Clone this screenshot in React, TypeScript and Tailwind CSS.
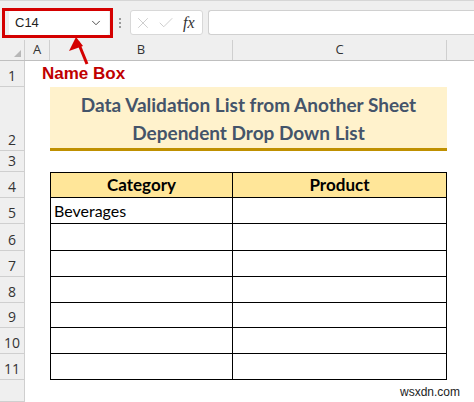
import { ChevronDown, X, Check } from "lucide-react";

const rowHeights = [26, 64, 21, 26, 26, 27, 26, 26, 25, 26, 26, 22];

function RowHead({ n, h }: { n: number | null; h: number }) {
  return (
    <div
      className="w-[25px] shrink-0 bg-[#efefef] border-r border-b border-[#cfcfcf] flex items-end justify-center pb-0 text-[14px] text-[#333]"
      style={{ height: h }}
    >
      {n}
    </div>
  );
}

export default function App() {
  return (
    <div className="relative w-[474px] h-[402px] overflow-hidden bg-white font-['Open_Sans',sans-serif]">
      {/* formula bar */}
      <div className="h-[40px] bg-[#efefef] border-t border-[#d6d6d6] flex items-start pt-[9px]">
        <div className="ml-[9px] w-[100px] h-[25px] bg-white rounded-[3px] flex items-center justify-between px-[6px] text-[13px] text-[#222]">
          <span className="font-['Liberation_Sans',sans-serif]">C14</span>
          <ChevronDown size={14} strokeWidth={1.6} className="text-[#444]" />
        </div>
        <div className="w-[21px] h-[25px] flex flex-col items-center justify-center gap-[2px]">
          <div className="w-[2px] h-[2px] bg-[#999]" />
          <div className="w-[2px] h-[2px] bg-[#999]" />
          <div className="w-[2px] h-[2px] bg-[#999]" />
        </div>
        <div className="w-[73px] h-[25px] bg-white border border-[#d8d8d8] rounded-[3px] flex items-center gap-[5px] px-[3px]">
          <X size={18} strokeWidth={1} className="text-[#bdbdbd]" />
          <Check size={18} strokeWidth={1} className="text-[#bdbdbd]" />
          <span className="font-['Liberation_Serif',serif] italic text-[16px] text-[#333] ml-[3px]">fx</span>
        </div>
        <div className="ml-[5px] flex-1 h-[25px] bg-white border border-[#d0d0d0] border-r-0 rounded-l-[3px]" />
      </div>

      {/* column headers */}
      <div className="flex h-[21px] bg-[#efefef] border-b border-[#bfbfbf] text-[13px] text-[#333]">
        <div className="w-[25px] shrink-0 border-r border-[#cfcfcf] flex items-end justify-end pr-[3px] pb-[3px]">
          <svg width="7" height="7" viewBox="0 0 7 7">
            <polygon points="7,0 7,7 0,7" fill="#b7b7b7" />
          </svg>
        </div>
        <div className="w-[25px] shrink-0 border-r border-[#cfcfcf] flex items-center justify-center">A</div>
        <div className="w-[183px] shrink-0 border-r border-[#cfcfcf] flex items-center justify-center">B</div>
        <div className="w-[214px] shrink-0 border-r border-[#cfcfcf] flex items-center justify-center">C</div>
        <div className="flex-1" />
      </div>

      {/* sheet body */}
      <div className="flex">
        <div className="flex flex-col">
          {rowHeights.map((h, i) => (
            <RowHead key={i} n={i < 11 ? i + 1 : null} h={h} />
          ))}
        </div>
        <div className="flex flex-col">
          <div className="h-[26px]" />
          <div className="h-[64px] flex">
            <div className="w-[25px]" />
            <div className="w-[397px] bg-[#fff2cc] border-b-[3px] border-[#bf9000] flex flex-col items-center justify-center pt-[2px] font-['Lato',sans-serif] font-bold text-[19px] leading-[28px] text-[#44546a]">
              <span>Data Validation List from Another Sheet</span>
              <span>Dependent Drop Down List</span>
            </div>
          </div>
          <div className="h-[21px]" />
          <div className="h-[26px] flex">
            <div className="w-[25px]" />
            <div className="w-[183px] bg-[#ffe699] border border-black flex items-center justify-center font-['Lato',sans-serif] font-bold text-[17px] text-black">
              Category
            </div>
            <div className="w-[214px] bg-[#ffe699] border border-l-0 border-black flex items-center justify-center font-['Lato',sans-serif] font-bold text-[17px] text-black">
              Product
            </div>
          </div>
          {rowHeights.slice(4, 11).map((h, i) => (
            <div key={i} className="flex" style={{ height: h }}>
              <div className="w-[25px]" />
              <div className="w-[183px] border-x border-b border-black flex items-center pl-[3px] font-['Lato',sans-serif] text-[16px] text-black">
                {i === 0 ? "Beverages" : ""}
              </div>
              <div className="w-[214px] border-r border-b border-black" />
            </div>
          ))}
        </div>
      </div>

      {/* Name Box annotation */}
      <div className="absolute left-[2px] top-[8px] w-[111px] h-[30px] border-[3px] border-[#d40000]" />
      <svg className="absolute left-[66px] top-[36px]" width="30" height="32" viewBox="0 0 30 32">
        <line x1="12" y1="6" x2="21" y2="28" stroke="#d40000" strokeWidth="3" />
        <polygon points="10,1 3,15 17,10" fill="#d40000" />
      </svg>
      <div className="absolute left-[42px] top-[61px] font-['Liberation_Sans',sans-serif] font-bold text-[17px] text-[#c00000]">
        Name Box
      </div>

      <div className="absolute left-[400px] top-[383px] font-['Liberation_Sans',sans-serif] text-[12px] text-[#222]">
        wsxdn.com
      </div>
    </div>
  );
}
